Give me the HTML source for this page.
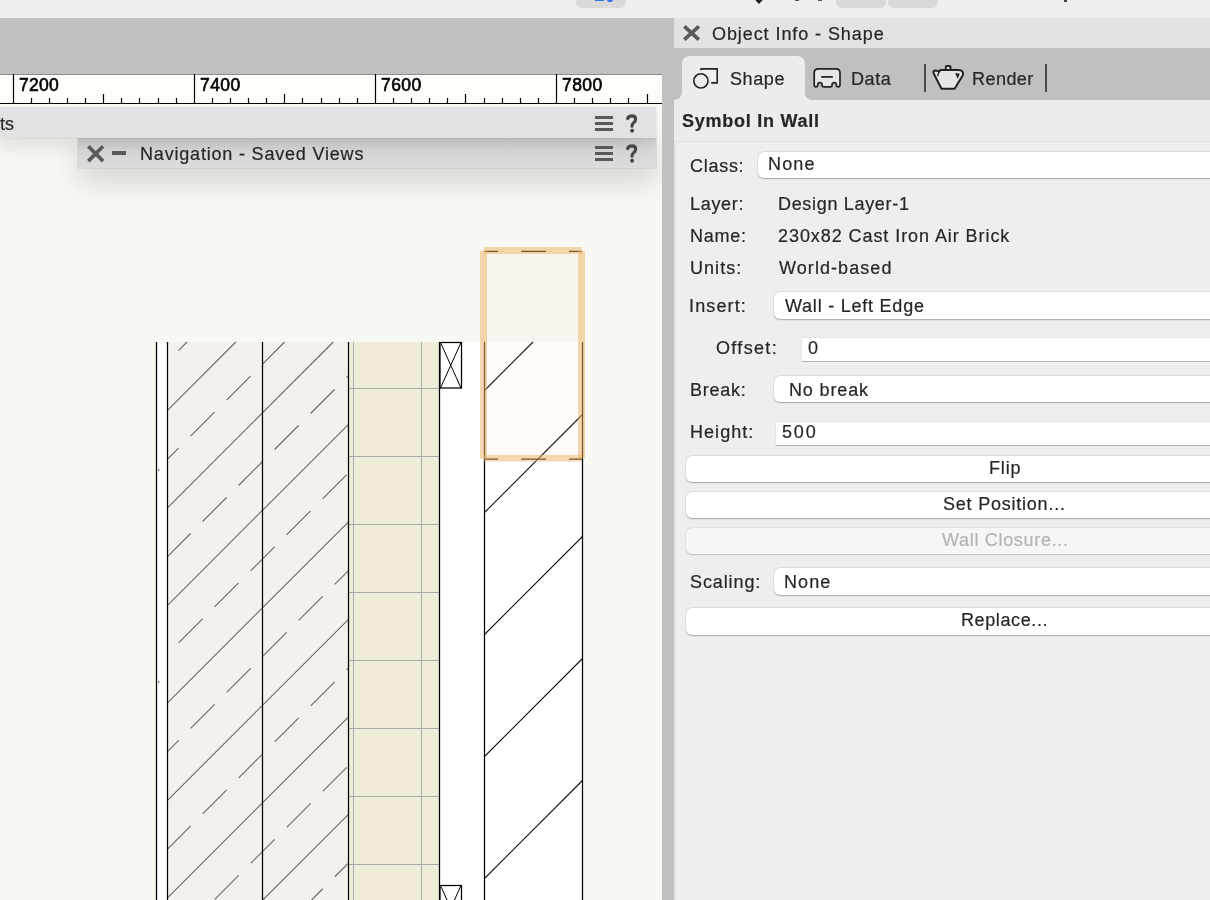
<!DOCTYPE html>
<html><head><meta charset="utf-8"><style>
*{box-sizing:border-box}
html,body{margin:0;padding:0}
body{width:1210px;height:900px;overflow:hidden;position:relative;background:#ececec;font-family:"Liberation Sans", sans-serif;color:#262626}
.abs{position:absolute}
.t{position:absolute;line-height:1;white-space:nowrap;font-family:"Liberation Sans", sans-serif;will-change:transform}
.dd{position:absolute;background:#fff;border-radius:6px;box-shadow:0 0.8px 1.5px rgba(0,0,0,0.28),0 0 0 0.5px rgba(0,0,0,0.05);height:26.5px;width:600px}
.tf{position:absolute;background:#fff;height:23px;width:600px;box-shadow:0 1px 0 #b4b4b4,0 -0.5px 0 #dadada,-0.5px 0 0 #dedede}
.btn{position:absolute;left:686px;width:637px;height:26.6px;background:#fff;border-radius:6px;box-shadow:0 0.8px 1.5px rgba(0,0,0,0.28),0 0 0 0.5px rgba(0,0,0,0.05)}
</style></head><body>
<div class="abs" style="left:0;top:0;width:1210px;height:18px;background:#eeeeee"></div>
<div class="abs" style="left:576px;top:-10px;width:50px;height:18px;border-radius:6px;background:#dadada"></div>
<div class="abs" style="left:595px;top:0;width:9px;height:1.2px;background:#2f6ff0"></div>
<div class="abs" style="left:607px;top:-3.5px;width:6px;height:5px;border-radius:3px;background:#2f6ff0"></div>
<div class="abs" style="left:755px;top:-5.6px;width:8px;height:8px;transform:rotate(45deg);border:2.4px solid #111;background:#888"></div>
<div class="abs" style="left:795px;top:0;width:4px;height:1px;background:#555"></div>
<div class="abs" style="left:818px;top:0;width:4px;height:1px;background:#555"></div>
<div class="abs" style="left:836px;top:-10px;width:50px;height:18px;border-radius:6px;background:#dadada"></div>
<div class="abs" style="left:888px;top:-10px;width:50px;height:18px;border-radius:6px;background:#dadada"></div>
<div class="abs" style="left:1064px;top:0;width:2.5px;height:1.5px;background:#444"></div>

<div class="abs" style="left:0;top:18px;width:662px;height:56px;background:#c0c0c0"></div>
<div class="abs" style="left:0;top:74px;width:662px;height:30px;background:#fdfdfa"></div>
<div class="abs" style="left:0;top:104px;width:662px;height:796px;background:#f9f9f4"></div>
<svg width="662" height="900" viewBox="0 0 662 900" style="position:absolute;left:0;top:0"><rect x="157" y="342" width="10.5" height="558" fill="#ffffff"/><rect x="167.5" y="342" width="181" height="558" fill="#f4f1ed"/><rect x="348.5" y="342" width="91" height="558" fill="#f1ebd9"/><rect x="439.5" y="342" width="143" height="558" fill="#ffffff"/><path d="M178.45 350.6L187.05 342M167.5 410.3L235.8 342M167.5 459.05L178.5 448.05M190.5 436.05L214.5 412.05M226.5 400.05L250.5 376.05M262.5 364.05L284.55 342M167.5 507.8L333.3 342M167.5 556.55L190.55 533.5M202.55 521.5L226.55 497.5M238.55 485.5L262.55 461.5M274.55 449.5L298.55 425.5M310.55 413.5L334.55 389.5M346.55 377.5L348.5 375.55M167.5 605.3L348.5 424.3M178.6 642.95L202.6 618.95M214.6 606.95L238.6 582.95M250.6 570.95L274.6 546.95M286.6 534.95L310.6 510.95M322.6 498.95L346.6 474.95M167.5 702.8L348.5 521.8M167.5 751.55L178.65 740.4M190.65 728.4L214.65 704.4M226.65 692.4L250.65 668.4M262.65 656.4L286.65 632.4M298.65 620.4L322.65 596.4M334.65 584.4L348.5 570.55M167.5 800.3L348.5 619.3M167.5 849.05L190.7 825.85M202.7 813.85L226.7 789.85M238.7 777.85L262.7 753.85M274.7 741.85L298.7 717.85M310.7 705.85L334.7 681.85M346.7 669.85L348.5 668.05M167.5 897.8L348.5 716.8M214.75 899.3L238.75 875.3M250.75 863.3L274.75 839.3M286.75 827.3L310.75 803.3M322.75 791.3L346.75 767.3M262.8 900L348.5 814.3M311.55 900L322.8 888.75M334.8 876.75L348.5 863.05" stroke="#686868" stroke-width="1.1" fill="none"/><path d="M353.5 342V900M421.5 342V900M348.5 388.5H439.5M348.5 456.5H439.5M348.5 524.5H439.5M348.5 592.5H439.5M348.5 660.5H439.5M348.5 728.5H439.5M348.5 796.5H439.5M348.5 864.5H439.5" stroke="#a9a9a9" stroke-width="1" fill="none"/><path d="M484.5 390.5L533 342M484.5 512.5L582.5 414.5M484.5 634.5L582.5 536.5M484.5 756.5L582.5 658.5M484.5 878.5L582.5 780.5" stroke="#111" stroke-width="1.1" fill="none"/><path d="M156.5 342V900M167.5 342V900M262.5 342V900M348.5 342V900M439.5 342V900M484.5 342V900M582.5 342V900" stroke="#000" stroke-width="1.25" fill="none"/><path d="M158 470h1.2M158 682h1.2" stroke="#000" stroke-width="1"/><rect x="440" y="342.5" width="21.5" height="45.5" fill="#fff" stroke="#000" stroke-width="1.25"/><path d="M440.5 342.5L461 388.0M461 342.5L440.5 388.0" stroke="#000" stroke-width="1"/><rect x="440" y="885.5" width="21.5" height="45.5" fill="#fff" stroke="#000" stroke-width="1.25"/><path d="M440.5 885.5L461 931.0M461 885.5L440.5 931.0" stroke="#000" stroke-width="1"/><rect x="484" y="251" width="98" height="207.5" fill="rgba(230,150,100,0.04)"/><path d="M484 251.3H498M521.3 251.3H546M569 251.3H582" stroke="#000" stroke-width="1.2"/><path d="M484 459.2H498M521.3 459.2H546M569 459.2H582" stroke="#000" stroke-width="1.2"/><rect x="484" y="247" width="98" height="7" fill="rgba(238,178,98,0.5)"/><rect x="484" y="455" width="98" height="6.5" fill="rgba(238,178,98,0.5)"/><rect x="480" y="251" width="7" height="207.5" fill="rgba(238,178,98,0.5)"/><rect x="578" y="251" width="7" height="207.5" fill="rgba(238,178,98,0.5)"/></svg>
<svg width="662" height="110" style="position:absolute;left:0;top:0"><path d="M0 74.5H662" stroke="#8c8c8c" stroke-width="1" fill="none"/><path d="M13.5 74V103M31.5 98V103M49.5 98V103M67.5 98V103M85.5 98V103M103.5 94V103M121.5 98V103M139.5 98V103M158.5 98V103M176.5 98V103M194.5 74V103M212.5 98V103M230.5 98V103M248.5 98V103M266.5 98V103M284.5 94V103M302.5 98V103M321.5 98V103M339.5 98V103M357.5 98V103M375.5 74V103M393.5 98V103M411.5 98V103M429.5 98V103M447.5 98V103M465.5 94V103M484.5 98V103M502.5 98V103M520.5 98V103M538.5 98V103M556.5 74V103M574.5 98V103M592.5 98V103M610.5 98V103M628.5 98V103M647.5 94V103M0 103.5H662" stroke="#000" stroke-width="1.2" fill="none"/></svg>
<div class="abs" style="left:77.6px;top:138px;width:578.4px;height:30px;background:linear-gradient(#cfcfcf,#dadada 40%,#dcdcdc);box-shadow:0 12px 30px rgba(0,0,0,0.17),0 0 1px rgba(0,0,0,0.4)"></div>
<div class="abs" style="left:-10px;top:107px;width:666px;height:31px;background:#e2e2e2;box-shadow:0 12px 22px -6px rgba(0,0,0,0.14),0 0 0.8px rgba(0,0,0,0.35)"></div>

<div class="abs" style="left:662px;top:18px;width:12px;height:882px;background:#c0c0c0"></div>

<div class="abs" style="left:674px;top:18px;width:536px;height:30px;background:#e3e3e3"></div>
<div class="abs" style="left:674px;top:48px;width:536px;height:852px;background:#ececec"></div>
<div class="abs" style="left:674px;top:48px;width:536px;height:20px;background:#c0c0c0"></div>
<div class="abs" style="left:674px;top:48px;width:8px;height:52px;background:#c0c0c0;border-bottom-right-radius:8px"></div>
<div class="abs" style="left:805.2px;top:48px;width:405px;height:52px;background:#c0c0c0;border-bottom-left-radius:7px"></div>
<div class="abs" style="left:682px;top:56px;width:123.2px;height:44px;background:#ececec;border-radius:8px 8px 0 0"></div>
<div class="abs" style="left:924px;top:64px;width:2px;height:28px;background:#4a4a4a"></div>
<div class="abs" style="left:1045px;top:64px;width:2px;height:28px;background:#4a4a4a"></div>
<div class="abs" style="left:674px;top:141px;width:536px;height:759px;background:#eeeeee"></div>
<div class="abs" style="left:674px;top:141px;width:2px;height:759px;background:#e4e4e4"></div>
<div class="abs" style="left:674px;top:140.5px;width:536px;height:1px;background:#e0e0e0"></div>

<div class="dd" style="left:757.7px;top:151.8px"></div>
<div class="dd" style="left:774px;top:292px"></div>
<div class="tf" style="left:801.6px;top:337.6px"></div>
<div class="dd" style="left:774px;top:375.8px"></div>
<div class="tf" style="left:775.7px;top:421.7px"></div>
<div class="btn" style="top:455.8px"></div>
<div class="btn" style="top:491.7px"></div>
<div class="btn" style="top:527.5px;background:#f6f6f6;box-shadow:0 0.6px 1.2px rgba(0,0,0,0.18),0 0 0 0.6px rgba(0,0,0,0.06)"></div>
<div class="dd" style="left:774px;top:568px"></div>
<div class="btn" style="top:608px"></div>
<svg class="abs" style="left:86.6px;top:144.6px;overflow:visible" width="17.4" height="17.4"><path d="M1.31 1.31L16.09 16.09M16.09 1.31L1.31 16.09" stroke="#5a5a5a" stroke-width="3.7" stroke-linecap="butt" fill="none"/></svg><div class="abs" style="left:112px;top:151.2px;width:14px;height:3.6px;background:#5a5a5a"></div><div class="abs" style="left:595px;top:116px;width:18px;height:3px;background:#5a5a5a"></div><div class="abs" style="left:595px;top:122px;width:18px;height:3px;background:#5a5a5a"></div><div class="abs" style="left:595px;top:128px;width:18px;height:3px;background:#5a5a5a"></div><div class="abs" style="left:595px;top:146.3px;width:18px;height:3px;background:#5a5a5a"></div><div class="abs" style="left:595px;top:152.3px;width:18px;height:3px;background:#5a5a5a"></div><div class="abs" style="left:595px;top:158.3px;width:18px;height:3px;background:#5a5a5a"></div><svg class="abs" style="left:0;top:114px;overflow:visible" width="1" height="1"><path d="M627.6 4.6Q628.6 1.9 632 1.9Q635.6 1.9 635.6 5.2Q635.6 7.5 633.4 9Q632 10 632 12.2" stroke="#474747" stroke-width="3.2" stroke-linecap="round" fill="none"/><circle cx="632.1" cy="16.8" r="2" fill="#474747"/></svg><svg class="abs" style="left:0;top:143.8px;overflow:visible" width="1" height="1"><path d="M627.6 4.6Q628.6 1.9 632 1.9Q635.6 1.9 635.6 5.2Q635.6 7.5 633.4 9Q632 10 632 12.2" stroke="#474747" stroke-width="3.2" stroke-linecap="round" fill="none"/><circle cx="632.1" cy="16.8" r="2" fill="#474747"/></svg><svg class="abs" style="left:682.8px;top:25.2px;overflow:visible" width="17.2" height="16"><path d="M1.31 1.31L15.89 14.69M15.89 1.31L1.31 14.69" stroke="#5a5a5a" stroke-width="3.7" stroke-linecap="butt" fill="none"/></svg><svg class="abs" style="left:0;top:0" width="1210" height="100" viewBox="0 0 1210 100"><path d="M700.9 70.3V68.9H717.2V82.9H711.2" stroke="#222" stroke-width="1.6" fill="#f2f2f2" stroke-linejoin="round"/><circle cx="700.9" cy="80.9" r="7.1" stroke="#222" stroke-width="1.6" fill="#ececec"/><path d="M814.2 73Q814.2 68.9 818.3 68.9H836Q840 68.9 840 73V84.5Q840 86.9 838.2 86.9Q836.3 86.9 836.3 85V84.6Q836.3 82.6 834.2 82.6Q832.1 82.6 832.1 84.6V85Q832.1 86.9 830 86.9H824Q822 86.9 822 85V84.6Q822 82.6 819.9 82.6Q817.8 82.6 817.8 84.6V85Q817.8 86.9 816 86.9Q814.2 86.9 814.2 84.5Z" stroke="#222" stroke-width="1.7" fill="#e6e6e6" stroke-linejoin="round"/><path d="M821.8 76.9H832.2" stroke="#222" stroke-width="1.7" stroke-linecap="round"/><rect x="945.8" y="66" width="4.7" height="4.5" rx="1" stroke="#222" stroke-width="2" fill="#e6e6e6"/><path d="M940.3 69.9H958.5Q963.6 70.1 963 74.9L954.6 88.8H941.5L933.6 73.2Q932.7 70.4 935.6 70.4Q937.5 70.6 939.4 71.6Z" stroke="#222" stroke-width="2" fill="#e6e6e6" stroke-linejoin="round"/><path d="M939 71.4L937.6 76.2" stroke="#222" stroke-width="1.3"/><path d="M955.1 73.1L959.7 73.7L957.8 79Z" fill="#222"/></svg>
<div class="t" style="left:139.7px;top:145px;font-size:18px;font-weight:400;letter-spacing:0.81px;color:#262626;-webkit-text-stroke:0.2px #262626;">Navigation - Saved Views</div>
<div class="t" style="left:711.8px;top:25.1px;font-size:18px;font-weight:400;letter-spacing:0.92px;color:#262626;-webkit-text-stroke:0.2px #262626;">Object Info - Shape</div>
<div class="t" style="left:730px;top:70.2px;font-size:18px;font-weight:400;letter-spacing:0.6px;color:#262626;-webkit-text-stroke:0.2px #262626;">Shape</div>
<div class="t" style="left:850.6px;top:70.2px;font-size:18px;font-weight:400;letter-spacing:0.57px;color:#262626;-webkit-text-stroke:0.2px #262626;">Data</div>
<div class="t" style="left:972px;top:70.2px;font-size:18px;font-weight:400;letter-spacing:0.46px;color:#262626;-webkit-text-stroke:0.2px #262626;">Render</div>
<div class="t" style="left:681.7px;top:112.2px;font-size:18px;font-weight:700;letter-spacing:0.74px;color:#262626;-webkit-text-stroke:0.2px #262626;">Symbol In Wall</div>
<div class="t" style="left:689.7px;top:157.2px;font-size:18px;font-weight:400;letter-spacing:0.72px;color:#262626;-webkit-text-stroke:0.2px #262626;">Class:</div>
<div class="t" style="left:767.7px;top:155.4px;font-size:18px;font-weight:400;letter-spacing:1.17px;color:#262626;-webkit-text-stroke:0.2px #262626;">None</div>
<div class="t" style="left:689.8px;top:195.2px;font-size:18px;font-weight:400;letter-spacing:0.68px;color:#262626;-webkit-text-stroke:0.2px #262626;">Layer:</div>
<div class="t" style="left:777.6px;top:195.2px;font-size:18px;font-weight:400;letter-spacing:0.68px;color:#262626;-webkit-text-stroke:0.2px #262626;">Design Layer-1</div>
<div class="t" style="left:689.8px;top:227.1px;font-size:18px;font-weight:400;letter-spacing:0.72px;color:#262626;-webkit-text-stroke:0.2px #262626;">Name:</div>
<div class="t" style="left:777.6px;top:227.1px;font-size:18px;font-weight:400;letter-spacing:0.93px;color:#262626;-webkit-text-stroke:0.2px #262626;">230x82 Cast Iron Air Brick</div>
<div class="t" style="left:689.8px;top:259.1px;font-size:18px;font-weight:400;letter-spacing:1.04px;color:#262626;-webkit-text-stroke:0.2px #262626;">Units:</div>
<div class="t" style="left:778.6px;top:259.1px;font-size:18px;font-weight:400;letter-spacing:1.07px;color:#262626;-webkit-text-stroke:0.2px #262626;">World-based</div>
<div class="t" style="left:688.7px;top:297px;font-size:18px;font-weight:400;letter-spacing:1.13px;color:#262626;-webkit-text-stroke:0.2px #262626;">Insert:</div>
<div class="t" style="left:785.3px;top:297px;font-size:18px;font-weight:400;letter-spacing:0.77px;color:#262626;-webkit-text-stroke:0.2px #262626;">Wall - Left Edge</div>
<div class="t" style="left:716px;top:339.2px;font-size:18px;font-weight:400;letter-spacing:1.33px;color:#262626;-webkit-text-stroke:0.2px #262626;">Offset:</div>
<div class="t" style="left:807.5px;top:339.2px;font-size:18px;font-weight:400;letter-spacing:0px;color:#262626;-webkit-text-stroke:0.2px #262626;">0</div>
<div class="t" style="left:689.7px;top:381.2px;font-size:18px;font-weight:400;letter-spacing:0.76px;color:#262626;-webkit-text-stroke:0.2px #262626;">Break:</div>
<div class="t" style="left:788.6px;top:381.2px;font-size:18px;font-weight:400;letter-spacing:0.86px;color:#262626;-webkit-text-stroke:0.2px #262626;">No break</div>
<div class="t" style="left:689.7px;top:423.3px;font-size:18px;font-weight:400;letter-spacing:1.05px;color:#262626;-webkit-text-stroke:0.2px #262626;">Height:</div>
<div class="t" style="left:781.7px;top:423.3px;font-size:18px;font-weight:400;letter-spacing:1.85px;color:#262626;-webkit-text-stroke:0.2px #262626;">500</div>
<div class="t" style="left:988.8px;top:459.2px;font-size:18px;font-weight:400;letter-spacing:0.83px;color:#262626;-webkit-text-stroke:0.2px #262626;">Flip</div>
<div class="t" style="left:943.4px;top:495.1px;font-size:18px;font-weight:400;letter-spacing:0.78px;color:#262626;-webkit-text-stroke:0.2px #262626;">Set Position...</div>
<div class="t" style="left:942.2px;top:531px;font-size:18px;font-weight:400;letter-spacing:0.69px;color:#b3b3b3;-webkit-text-stroke:0.2px #b3b3b3;">Wall Closure...</div>
<div class="t" style="left:689.7px;top:573px;font-size:18px;font-weight:400;letter-spacing:0.9px;color:#262626;-webkit-text-stroke:0.2px #262626;">Scaling:</div>
<div class="t" style="left:783.8px;top:573px;font-size:18px;font-weight:400;letter-spacing:1.07px;color:#262626;-webkit-text-stroke:0.2px #262626;">None</div>
<div class="t" style="left:961.3px;top:610.8px;font-size:18px;font-weight:400;letter-spacing:0.61px;color:#262626;-webkit-text-stroke:0.2px #262626;">Replace...</div>
<div class="t" style="left:19px;top:77.2px;font-size:17.5px;font-weight:400;letter-spacing:0.23px;color:#000;-webkit-text-stroke:0.6px #000;">7200</div>
<div class="t" style="left:199.8px;top:77.2px;font-size:17.5px;font-weight:400;letter-spacing:0.4px;color:#000;-webkit-text-stroke:0.6px #000;">7400</div>
<div class="t" style="left:380.9px;top:77.2px;font-size:17.5px;font-weight:400;letter-spacing:0.4px;color:#000;-webkit-text-stroke:0.6px #000;">7600</div>
<div class="t" style="left:562.2px;top:77.2px;font-size:17.5px;font-weight:400;letter-spacing:0.4px;color:#000;-webkit-text-stroke:0.6px #000;">7800</div>
<div class="t" style="left:-0.3px;top:114.8px;font-size:18px;font-weight:400;letter-spacing:0px;color:#262626;-webkit-text-stroke:0.2px #262626;">ts</div>
</body></html>
